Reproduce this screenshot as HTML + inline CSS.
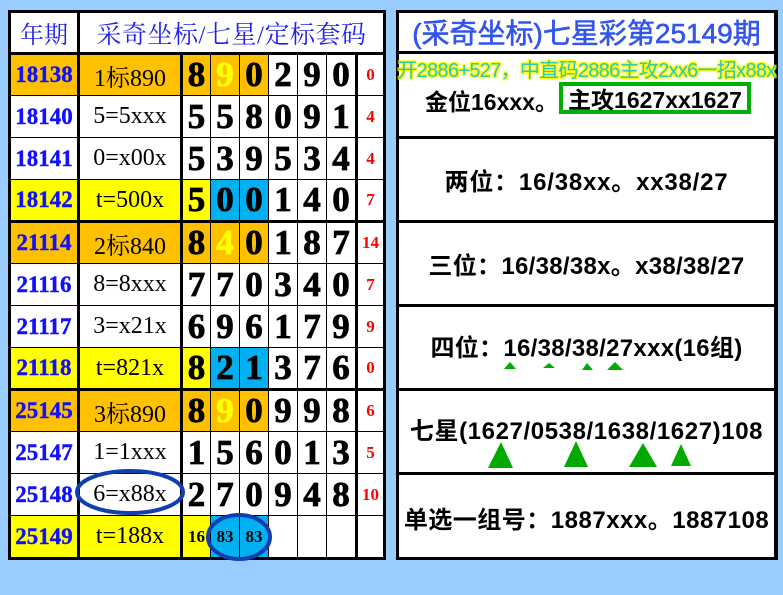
<!DOCTYPE html>
<html><head><meta charset="utf-8"><style>
*{margin:0;padding:0;box-sizing:border-box}
body{width:783px;height:595px;background:#99CCFF;position:relative;overflow:hidden;font-family:"Liberation Serif","Noto Serif CJK SC",serif}
.box{position:absolute;background:#000}
.c{position:absolute;background:#fff;display:flex;align-items:center;justify-content:center;white-space:nowrap}
.c0{left:11px;width:66px;color:#1010ff;font-weight:bold;font-size:23px;-webkit-text-stroke:0.4px #1010ff}
.c1{left:80px;width:100px;font-size:24px;color:#000}
.c2{left:183px;width:27px}.c3{left:211px;width:28px}.c4{left:240px;width:28px}
.c5{left:269px;width:28px}.c6{left:298px;width:28px}.c7{left:327px;width:28px}
.d{font-weight:bold;font-size:35px;color:#000;-webkit-text-stroke:0.8px #000}
.d.yt{-webkit-text-stroke:0.8px #FFFF00}
.c8{left:358px;width:25px;color:#f00;font-weight:bold;font-size:17px}
.r0{top:55px;height:40px}.r1{top:96px;height:41px}.r2{top:138px;height:41px}.r3{top:180px;height:40px}
.r4{top:223px;height:40px}.r5{top:264px;height:41px}.r6{top:306px;height:41px}.r7{top:348px;height:40px}
.r8{top:391px;height:40px}.r9{top:432px;height:41px}.r10{top:474px;height:41px}.r11{top:516px;height:41px}
.o{background:#FFC000}.y{background:#FFFF00}.b{background:#00B0F0}.yt{color:#FFFF00}
.s{font-size:17px}
.p{position:absolute;left:399px;width:375px;background:#fff;display:flex;align-items:center;justify-content:center;white-space:nowrap;font-family:"Liberation Sans","Noto Sans CJK SC",sans-serif;font-weight:bold;font-size:24px;color:#000}
</style></head><body>
<div class="box" style="left:8px;top:10px;width:378px;height:550px"></div>
<div class="c c0" style="top:13px;height:39px;font-weight:normal;color:#2020ee;font-size:24px;-webkit-text-stroke:0">年期</div>
<div class="c" style="left:80px;width:303px;top:13px;height:39px;font-size:25px;letter-spacing:0.5px;color:#2020ee">采奇坐标/七星/定标套码</div>

<div class="c c0 r0 o">18138</div><div class="c c1 r0 o">1标890</div>
<div class="c c2 r0 o d">8</div><div class="c c3 r0 o d yt">9</div><div class="c c4 r0 o d">0</div><div class="c c5 r0 d">2</div><div class="c c6 r0 d">9</div><div class="c c7 r0 d">0</div><div class="c c8 r0">0</div>

<div class="c c0 r1">18140</div><div class="c c1 r1">5=5xxx</div>
<div class="c c2 r1 d">5</div><div class="c c3 r1 d">5</div><div class="c c4 r1 d">8</div><div class="c c5 r1 d">0</div><div class="c c6 r1 d">9</div><div class="c c7 r1 d">1</div><div class="c c8 r1">4</div>

<div class="c c0 r2">18141</div><div class="c c1 r2">0=x00x</div>
<div class="c c2 r2 d">5</div><div class="c c3 r2 d">3</div><div class="c c4 r2 d">9</div><div class="c c5 r2 d">5</div><div class="c c6 r2 d">3</div><div class="c c7 r2 d">4</div><div class="c c8 r2">4</div>

<div class="c c0 r3 y">18142</div><div class="c c1 r3 y">t=500x</div>
<div class="c c2 r3 y d">5</div><div class="c c3 r3 b d">0</div><div class="c c4 r3 b d">0</div><div class="c c5 r3 d">1</div><div class="c c6 r3 d">4</div><div class="c c7 r3 d">0</div><div class="c c8 r3">7</div>

<div class="c c0 r4 o">21114</div><div class="c c1 r4 o">2标840</div>
<div class="c c2 r4 o d">8</div><div class="c c3 r4 o d yt">4</div><div class="c c4 r4 o d">0</div><div class="c c5 r4 d">1</div><div class="c c6 r4 d">8</div><div class="c c7 r4 d">7</div><div class="c c8 r4">14</div>

<div class="c c0 r5">21116</div><div class="c c1 r5">8=8xxx</div>
<div class="c c2 r5 d">7</div><div class="c c3 r5 d">7</div><div class="c c4 r5 d">0</div><div class="c c5 r5 d">3</div><div class="c c6 r5 d">4</div><div class="c c7 r5 d">0</div><div class="c c8 r5">7</div>

<div class="c c0 r6">21117</div><div class="c c1 r6">3=x21x</div>
<div class="c c2 r6 d">6</div><div class="c c3 r6 d">9</div><div class="c c4 r6 d">6</div><div class="c c5 r6 d">1</div><div class="c c6 r6 d">7</div><div class="c c7 r6 d">9</div><div class="c c8 r6">9</div>

<div class="c c0 r7 y">21118</div><div class="c c1 r7 y">t=821x</div>
<div class="c c2 r7 y d">8</div><div class="c c3 r7 b d">2</div><div class="c c4 r7 b d">1</div><div class="c c5 r7 d">3</div><div class="c c6 r7 d">7</div><div class="c c7 r7 d">6</div><div class="c c8 r7">0</div>

<div class="c c0 r8 o">25145</div><div class="c c1 r8 o">3标890</div>
<div class="c c2 r8 o d">8</div><div class="c c3 r8 o d yt">9</div><div class="c c4 r8 o d">0</div><div class="c c5 r8 d">9</div><div class="c c6 r8 d">9</div><div class="c c7 r8 d">8</div><div class="c c8 r8">6</div>

<div class="c c0 r9">25147</div><div class="c c1 r9">1=1xxx</div>
<div class="c c2 r9 d">1</div><div class="c c3 r9 d">5</div><div class="c c4 r9 d">6</div><div class="c c5 r9 d">0</div><div class="c c6 r9 d">1</div><div class="c c7 r9 d">3</div><div class="c c8 r9">5</div>

<div class="c c0 r10">25148</div><div class="c c1 r10">6=x88x</div>
<div class="c c2 r10 d">2</div><div class="c c3 r10 d">7</div><div class="c c4 r10 d">0</div><div class="c c5 r10 d">9</div><div class="c c6 r10 d">4</div><div class="c c7 r10 d">8</div><div class="c c8 r10">10</div>

<div class="c c0 r11 y">25149</div><div class="c c1 r11 y">t=188x</div>
<div class="c c2 r11 y s" style="font-weight:bold">16</div><div class="c c3 r11 b s" style="font-weight:bold">83</div><div class="c c4 r11 b s" style="font-weight:bold">83</div><div class="c c5 r11"></div><div class="c c6 r11"></div><div class="c c7 r11"></div><div class="c c8 r11"></div>

<svg style="position:absolute;left:0;top:0" width="783" height="595">
<ellipse cx="130" cy="492" rx="53" ry="21" fill="none" stroke="#1040b0" stroke-width="4"/>
<ellipse cx="239" cy="537" rx="31" ry="22" fill="none" stroke="#1040b0" stroke-width="4"/>
</svg>

<div class="box" style="left:396px;top:10px;width:382px;height:550px"></div>
<div class="p" style="top:13px;height:38px;font-size:28px;font-weight:normal;color:#3355ee;-webkit-text-stroke:0.6px #3355ee">(采奇坐标)七星彩第25149期</div>
<div class="p" style="top:54px;height:82px"></div>
<div class="p" style="top:139px;height:81px;letter-spacing:0.8px">两位：16/38xx。xx38/27</div>
<div class="p" style="top:223px;height:81px;letter-spacing:0.3px">三位：16/38/38x。x38/38/27</div>
<div class="p" style="top:307px;height:81px;padding-bottom:4px;letter-spacing:0.3px">四位：16/38/38/27xxx(16组)</div>
<div class="p" style="top:391px;height:81px;padding-bottom:6px;letter-spacing:0.6px">七星(1627/0538/1638/1627)108</div>
<div class="p" style="top:475px;height:82px;padding-top:2px;letter-spacing:0.5px">单选一组号：1887xxx。1887108</div>

<div style="position:absolute;left:388px;top:54px;width:397px;text-align:center;white-space:nowrap;font-family:'Liberation Sans','Noto Sans CJK SC',sans-serif;font-size:20px;letter-spacing:-0.7px;color:#30c8b0;text-shadow:0 0 2px #ffff00,0 0 2px #ffff00,1px 1px 1px #ffff00,-1px -1px 1px #ffff00,1px -1px 1px #ffff00,-1px 1px 1px #ffff00">开2886+527，中直码2886主攻2xx6一招x88x</div>
<div style="position:absolute;left:425px;top:83px;font-family:'Liberation Sans','Noto Sans CJK SC',sans-serif;font-weight:bold;font-size:23px;white-space:nowrap">金位16xxx。</div>
<div style="position:absolute;left:559px;top:82px;width:192px;height:32px;border:4px solid #00b000;background:#fff;font-family:'Liberation Sans','Noto Sans CJK SC',sans-serif;font-weight:bold;font-size:23px;display:flex;align-items:center;justify-content:center;white-space:nowrap">主攻1627xx1627</div>

<svg style="position:absolute;left:0;top:0" width="783" height="595">
<g fill="#00aa00">
<polygon points="504,369 516,369 510,362"/>
<polygon points="543,368 555,368 549,363"/>
<polygon points="582,370 593,370 587,363"/>
<polygon points="607,370 623,370 615,362"/>
<polygon points="488,468 513,468 501,442"/>
<polygon points="564,467 588,467 576,441"/>
<polygon points="629,467 657,467 643,443"/>
<polygon points="671,466 691,466 681,444"/>
</g></svg>
</body></html>
